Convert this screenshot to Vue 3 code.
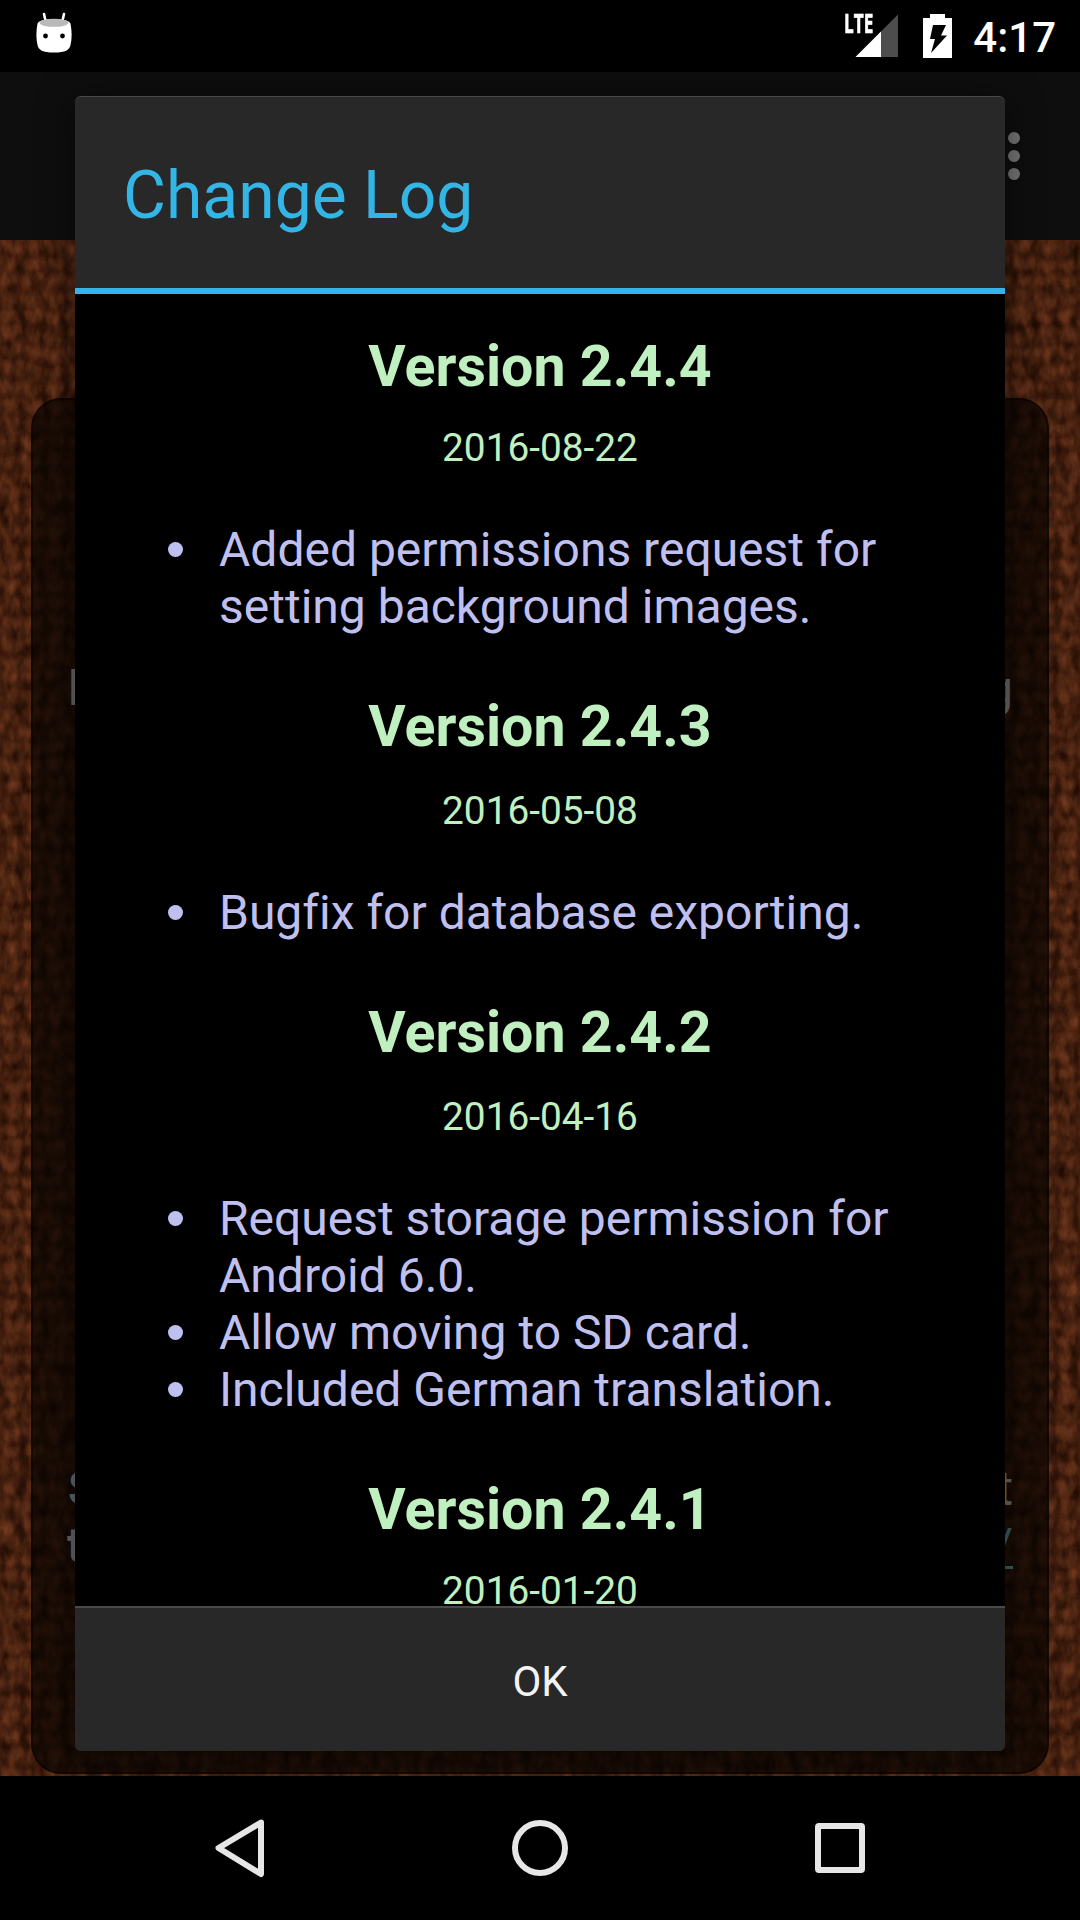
<script setup>
const releases = [
  { version: '2.4.4', date: '2016-08-22', gap: 0, items: [['Added permissions request for', 'setting background images.']] },
  { version: '2.4.3', date: '2016-05-08', gap: 3, items: [['Bugfix for database exporting.']] },
  {
    version: '2.4.2',
    date: '2016-04-16',
    gap: 3,
    items: [['Request storage permission for', 'Android 6.0.'], ['Allow moving to SD card.'], ['Included German translation.']],
  },
  { version: '2.4.1', date: '2016-01-20', gap: 0, items: [] },
]
</script>

<template>
  <div class="screen">
    <header class="status">
      <svg class="notif" width="36" height="42" viewBox="0 0 36 42">
        <path d="M8 2l2 9M28 2l-2 9" stroke="#fff" stroke-width="2.6" stroke-linecap="round" />
        <path d="M1.500 11.500C0 19 0 27 1.500 33c1 5 5 7.500 16.500 7.500S33.500 38 34.500 33c1.500-6 1.500-14 0-21.500-2-6-31-6-33 0z" fill="#fff" />
        <ellipse cx="18" cy="10.800" rx="14.500" ry="4" fill="#b9b9b9" />
        <circle cx="9.500" cy="24" r="2.400" fill="#000" /><circle cx="26.500" cy="24" r="2.400" fill="#000" />
      </svg>
      <div class="tray">
        <div class="signal">
          <svg width="54" height="44" viewBox="0 0 54 44">
            <path d="M10.500 43L53 0.500V43z" fill="#4d4d4d" />
            <path d="M10.500 43L36 17.500V43z" fill="#fff" />
          </svg>
          <span class="lte">LTE</span>
        </div>
        <svg class="battery" width="29" height="44" viewBox="0 0 29 44">
          <path d="M7 0h15v4h7v40H0V4h7z" fill="#fff" />
          <path d="M10 11h13l-5 10.500h6L8 39l4-14H7z" fill="#000" />
        </svg>
        <span class="clock">4:17</span>
      </div>
    </header>

    <main class="app">
      <div class="toolbar">
        <div class="overflow"><i /><i /><i /></div>
      </div>
      <div class="wall">
        <svg class="knit" width="1080" height="1536">
          <defs>
            <filter id="wool" x="0" y="0" width="100%" height="100%" color-interpolation-filters="sRGB">
              <feTurbulence type="fractalNoise" baseFrequency="0.1 0.05" numOctaves="4" seed="7" />
              <feColorMatrix values="0.40 0 0 0 0.088  0.22 0 0 0 0.022  0.13 0 0 0 -0.004  0 0 0 0 1" />
            </filter>
            <filter id="soft" x="0" y="0" width="100%" height="100%">
              <feTurbulence type="fractalNoise" baseFrequency="0.03" numOctaves="2" seed="3" result="n" />
              <feDisplacementMap in="SourceGraphic" in2="n" scale="16" xChannelSelector="R" yChannelSelector="G" />
              <feGaussianBlur stdDeviation="2" />
            </filter>
            <pattern id="rib" width="22" height="18" patternUnits="userSpaceOnUse">
              <path d="M0 0v18M22 0v18" stroke="#100300" stroke-width="6" opacity=".3" />
              <path d="M4 2l7 6 7-6" fill="none" stroke="#a0603f" stroke-width="4" opacity=".16" />
              <path d="M3 11l8 6 8-6" fill="none" stroke="#100300" stroke-width="4" opacity=".2" />
            </pattern>
          </defs>
          <rect width="1080" height="1536" filter="url(#wool)" />
          <rect width="1080" height="1536" fill="url(#rib)" filter="url(#soft)" />
        </svg>
        <div class="card">
          <div class="line first"><span>h</span><span>g</span></div>
          <div class="line second"><b>S</b><span>t</span></div>
          <div class="line third"><b>t</b><u>/</u></div>
        </div>
      </div>
    </main>

    <section class="dialog">
      <h1>Change Log</h1>
      <div class="log">
        <article v-for="r in releases" :key="r.version">
          <h2>Version {{ r.version }}</h2>
          <time :style="{ marginTop: r.gap + 'px' }">{{ r.date }}</time>
          <ul v-if="r.items.length">
            <li v-for="item in r.items" :key="item[0]">
              <span v-for="row in item" :key="row">{{ row }}</span>
            </li>
          </ul>
        </article>
      </div>
      <button>OK</button>
    </section>

    <nav class="nav">
      <svg width="300" height="144" viewBox="0 0 300 144"><path d="M171 46.500L128.500 72 171 98z" /></svg>
      <svg width="300" height="144" viewBox="0 0 300 144"><circle cx="150" cy="72" r="25" /></svg>
      <svg width="300" height="144" viewBox="0 0 300 144"><rect x="128" y="50" width="44" height="44" rx="1" /></svg>
    </nav>
  </div>
</template>

<style>
body { background: #000; }
</style>

<style scoped>
* { box-sizing: border-box; }
.screen { position: relative; width: 1080px; height: 1920px; background: #000; overflow: hidden; font-family: Roboto, sans-serif; font-variant-ligatures: none; display: flex; flex-direction: column; }
.status { height: 72px; flex: none; display: flex; justify-content: space-between; padding: 12px 24px 0 36px; color: #fff; }
.tray { display: flex; align-items: flex-start; }
.signal { position: relative; width: 54px; height: 44px; margin: 2px 24px 0 0; }
.lte { position: absolute; left: -1px; top: -5px; font: 700 26px/28px "Open Sans", sans-serif; -webkit-text-stroke: .6px #fff; transform: scaleX(.66); transform-origin: 0 0; }
.battery { margin: 2px 21px 0 0; }
.clock { font-size: 42px; line-height: 52px; font-weight: 500; }
.app { height: 1704px; flex: none; display: flex; flex-direction: column; }
.toolbar { height: 168px; flex: none; background: #0e0e0e; display: flex; justify-content: flex-end; padding: 60px 60px 0 0; }
.overflow { display: flex; flex-direction: column; gap: 6px; }
.overflow i { width: 12px; height: 12px; border-radius: 50%; background: #767676; }
.wall { flex: 1; position: relative; padding: 158px 31px 2px; overflow: hidden; background: #451c09; }
.knit { position: absolute; left: 0; top: 0; }
.card { position: relative; height: 1376px; border-radius: 30px; border: 2px solid rgba(0,0,0,.35); background: rgba(8,4,2,.7); color: #6c6c6c; font-size: 48px; line-height: 57px; padding: 0 34px 0 35px; }
.line { display: flex; justify-content: space-between; }
.first { padding-top: 260px; }
.second { padding-top: 743px; }
.third b { margin-left: -1px; }
u { color: #3a6464; text-decoration-thickness: 3px; text-underline-offset: 4px; }
.dialog { position: absolute; left: 75px; top: 96px; width: 930px; height: 1655px; border-radius: 6px; background: #282828; border-top: 1px solid #4a4a4a; box-shadow: 0 6px 34px 2px rgba(0,0,0,.5); display: flex; flex-direction: column; overflow: hidden; }
h1 { margin: 0; height: 197px; flex: none; padding: 0 48px; font-size: 66px; font-weight: 400; line-height: 198px; color: #33b5e5; border-bottom: 6px solid #33b5e5; }
.log { flex: 1; min-height: 0; background: #000; overflow: hidden; padding: 39px 24px 0; }
article { display: flex; flex-direction: column; }
h2 { margin: 0; text-align: center; font-size: 57.3px; line-height: 68px; font-weight: 700; color: #c0f0c0; }
time { display: block; text-align: center; font-size: 38.8px; line-height: 46px; padding-top: 24px; color: #c0f0c0; }
ul { list-style: none; margin: 50px 0 58px; padding: 0 0 0 120px; color: #c0c0f0; font-size: 48px; line-height: 57px; }
li { position: relative; }
li span { display: block; white-space: nowrap; }
li::before { content: ""; position: absolute; left: -51px; top: 21px; width: 15px; height: 15px; border-radius: 50%; background: #c0c0f0; }
button { flex: none; height: 145px; border: 0; border-top: 2px solid #4a4a4a; background: #282828; color: #f3f3f3; font: 400 42px Roboto, sans-serif; padding: 4px 0 0; }
.nav { height: 144px; flex: none; display: flex; justify-content: center; background: #000; }
.nav svg { fill: none; stroke: #e6e6e6; stroke-width: 6; stroke-linejoin: round; }
</style>
